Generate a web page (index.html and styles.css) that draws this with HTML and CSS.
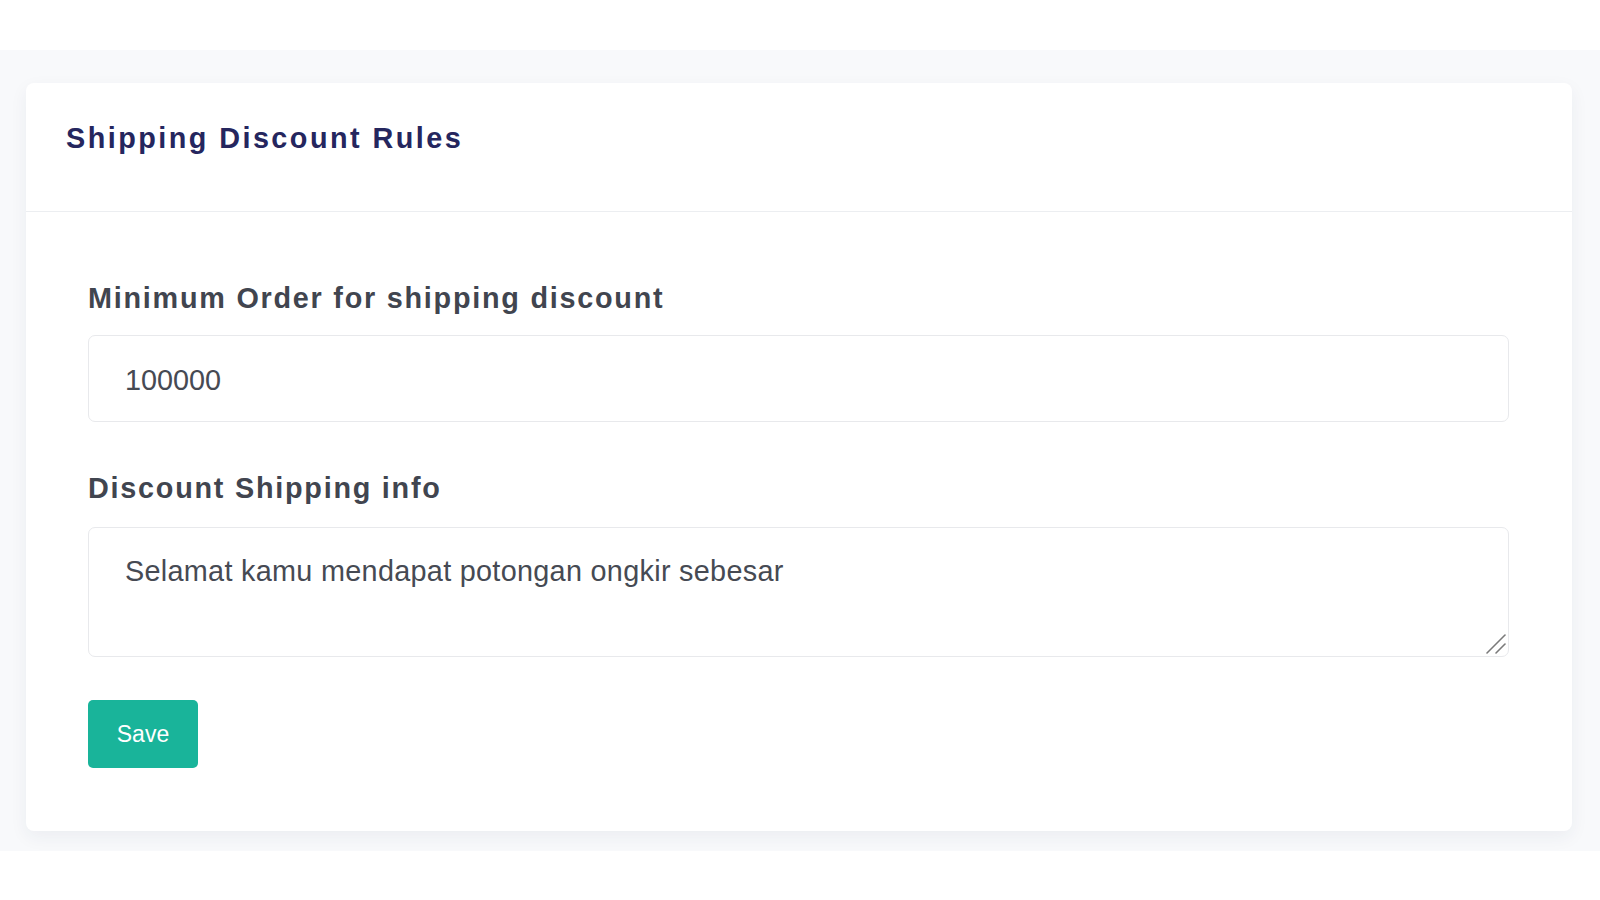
FILE: index.html
```html
<!DOCTYPE html>
<html lang="en">
<head>
<meta charset="utf-8">
<title>Shipping Discount Rules</title>
<link rel="stylesheet" href="styles.css">
</head>
<body>
<div class="topbar"></div>
<main class="page">
  <section class="card">
    <header class="card-header">
      <h2 class="card-title">Shipping Discount Rules</h2>
    </header>
    <form class="card-body">
      <div class="field">
        <label class="field-label" for="min-order">Minimum Order for shipping discount</label>
        <input class="field-input" id="min-order" type="text" value="100000">
      </div>
      <div class="field">
        <label class="field-label" for="info">Discount Shipping info</label>
        <div class="textarea-wrap">
          <textarea class="field-input field-textarea" id="info">Selamat kamu mendapat potongan ongkir sebesar</textarea>
          <svg class="grip" width="22" height="22" viewBox="0 0 22 22" aria-hidden="true">
            <line x1="2" y1="20" x2="20" y2="2" stroke="#7a7a7a" stroke-width="1.6" stroke-linecap="round"/>
            <line x1="11" y1="20" x2="20" y2="11" stroke="#7a7a7a" stroke-width="1.6" stroke-linecap="round"/>
          </svg>
        </div>
      </div>
      <div class="actions">
        <button class="btn-save" type="button">Save</button>
      </div>
    </form>
  </section>
</main>
<div class="bottom"></div>
</body>
</html>
```

FILE: styles.css
```css
* { box-sizing: border-box; }

html, body {
  margin: 0;
  padding: 0;
  background: #ffffff;
  font-family: "Liberation Sans", Arial, sans-serif;
}

.topbar {
  height: 50px;
  background: #ffffff;
}

.page {
  background: #f8f9fb;
  padding: 33px 28px 20px 26px;
}

.card {
  background: #ffffff;
  border-radius: 8px;
  box-shadow: 0 6px 18px rgba(40, 50, 80, 0.06);
}

.card-header {
  height: 129px;
  padding: 38px 40px 0 40px;
  border-bottom: 1px solid #eceef1;
}

.card-title {
  margin: 0;
  font-size: 28.8px;
  line-height: 34.6px;
  font-weight: 700;
  letter-spacing: 2.45px;
  color: #25265e;
}

.card-body {
  padding: 65px 63px 63px 62px;
  display: flex;
  flex-direction: column;
}

.field {
  display: flex;
  flex-direction: column;
  margin-bottom: 43px;
}

.field + .field {
  margin-top: 2px;
}

.field-label {
  font-size: 28.8px;
  line-height: 43.2px;
  font-weight: 700;
  letter-spacing: 1.75px;
  color: #41454f;
  margin-bottom: 15px;
}

.field-input {
  display: block;
  width: 100%;
  height: 87px;
  padding: 23px 36px 19px;
  font-family: "Liberation Sans", Arial, sans-serif;
  font-size: 28.8px;
  line-height: 43.2px;
  color: #464a53;
  background: #ffffff;
  border: 1px solid #e8e9ec;
  border-radius: 7px;
  outline: none;
}

.textarea-wrap {
  position: relative;
  margin-top: 2px;
}

.field-textarea {
  height: 130px;
  padding: 22px 36px 10px;
  letter-spacing: 0.3px;
  resize: none;
}

.grip {
  position: absolute;
  right: 2px;
  bottom: 2px;
  pointer-events: none;
}

.actions {
  display: flex;
}

.btn-save {
  width: 110px;
  height: 68px;
  border: none;
  border-radius: 5px;
  background: #19b49a;
  color: #ffffff;
  font-family: "Liberation Sans", Arial, sans-serif;
  font-size: 23px;
  padding: 0;
  cursor: pointer;
}

.bottom {
  height: 50px;
  background: #ffffff;
}
```
